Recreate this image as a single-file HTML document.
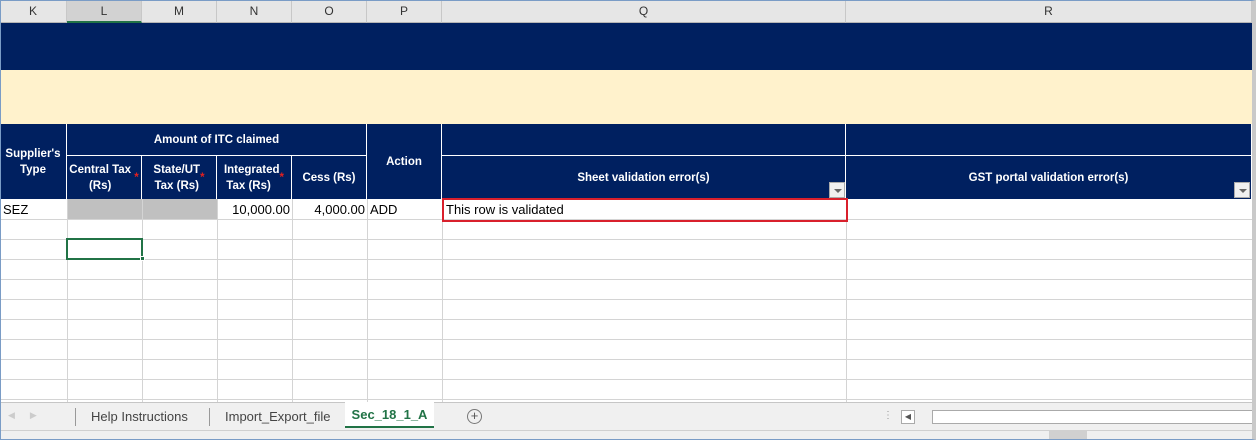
<!DOCTYPE html><html><head><style>
*{margin:0;padding:0;box-sizing:border-box}
body{width:1256px;height:440px;position:relative;overflow:hidden;background:#fff;font-family:"Liberation Sans",sans-serif}
.a{position:absolute}
.ch{top:0;height:23px;background:#e6e6e6;border-right:1px solid #c8c8c8;border-bottom:1px solid #b5b5b5;font-size:12px;color:#333;text-align:center;line-height:23px}
.h{position:absolute;color:#fff;font-weight:bold;font-size:11.5px;display:flex;align-items:center;justify-content:center;text-align:center;line-height:16px;border-right:1px solid #fff;white-space:nowrap}
.hl{left:0;width:1252px;height:1px;background:#d4d4d4}
.vl{top:199px;height:203px;width:1px;background:#d4d4d4}
.s{color:#e02020}
.dd{position:absolute;width:16px;height:16px;background:#f0f0f0;border:1px solid #aaa}
.dd:after{content:"";position:absolute;left:4px;top:6px;border-left:4px solid transparent;border-right:4px solid transparent;border-top:4px solid #666}
.d{position:absolute;top:202px;font-size:13px;font-family:"Liberation Sans",sans-serif;color:#000}
</style></head><body>
<div class="a ch" style="left:0;width:67px">K</div>
<div class="a ch" style="left:67px;width:75px;background:#d2d2d2;border-bottom:2px solid #217346">L</div>
<div class="a ch" style="left:142px;width:75px">M</div>
<div class="a ch" style="left:217px;width:75px">N</div>
<div class="a ch" style="left:292px;width:75px">O</div>
<div class="a ch" style="left:367px;width:75px">P</div>
<div class="a ch" style="left:442px;width:404px">Q</div>
<div class="a ch" style="left:846px;width:406px">R</div>
<div class="a" style="left:0;top:23px;width:1252px;height:47px;background:#002060"></div>
<div class="a" style="left:0;top:70px;width:1252px;height:54px;background:#fff2cc"></div>
<div class="a" style="left:0;top:124px;width:1252px;height:75px;background:#002060"></div>
<div class="h" style="left:0;top:124px;width:67px;height:75px">Supplier's<br>Type</div>
<div class="h" style="left:67px;top:124px;width:300px;height:32px;border-bottom:1px solid #fff">Amount of ITC claimed</div>
<div class="h" style="left:67px;top:156px;width:75px;height:43px">Central Tax<br>(Rs) <span class="s">&nbsp;*</span></div>
<div class="h" style="left:142px;top:156px;width:75px;height:43px">State/UT<br>Tax (Rs) <span class="s">*</span></div>
<div class="h" style="left:217px;top:156px;width:75px;height:43px">Integrated<br>Tax (Rs) &nbsp;<span class="s">*</span></div>
<div class="h" style="left:292px;top:156px;width:75px;height:43px">Cess (Rs)</div>
<div class="h" style="left:367px;top:124px;width:75px;height:75px">Action</div>
<div class="h" style="left:442px;top:124px;width:404px;height:32px;border-bottom:1px solid #fff"></div>
<div class="h" style="left:442px;top:156px;width:404px;height:43px">Sheet validation error(s)</div>
<div class="h" style="left:846px;top:124px;width:406px;height:32px;border-bottom:1px solid #fff"></div>
<div class="h" style="left:846px;top:156px;width:406px;height:43px">GST portal validation error(s)</div>
<div class="dd" style="left:829px;top:182px"></div>
<div class="dd" style="left:1234px;top:182px"></div>
<div class="a" style="left:67px;top:199px;width:150px;height:20px;background:#c0c0c0"></div>
<div class="hl a" style="top:219px"></div><div class="hl a" style="top:239px"></div><div class="hl a" style="top:259px"></div><div class="hl a" style="top:279px"></div><div class="hl a" style="top:299px"></div><div class="hl a" style="top:319px"></div><div class="hl a" style="top:339px"></div><div class="hl a" style="top:359px"></div><div class="hl a" style="top:379px"></div><div class="hl a" style="top:399px"></div>
<div class="vl a" style="left:67px"></div><div class="vl a" style="left:142px"></div><div class="vl a" style="left:217px"></div><div class="vl a" style="left:292px"></div><div class="vl a" style="left:367px"></div><div class="vl a" style="left:442px"></div><div class="vl a" style="left:846px"></div>
<div class="d" style="left:3px">SEZ</div>
<div class="d" style="left:217px;width:73px;text-align:right">10,000.00</div>
<div class="d" style="left:292px;width:73px;text-align:right">4,000.00</div>
<div class="d" style="left:370px">ADD</div>
<div class="a" style="left:442px;top:198px;width:406px;height:24px;border:2px solid #d9202c"></div>
<div class="d" style="left:446px">This row is validated</div>
<div class="a" style="left:66px;top:238px;width:77px;height:22px;border:2px solid #217346"></div>
<div class="a" style="left:140px;top:256px;width:5px;height:5px;background:#217346;border:1px solid #fff"></div>
<div class="a" style="left:0;top:402px;width:1256px;height:28px;background:#f0f0f0;border-top:1px solid #c6c6c6"></div>
<div class="a" style="left:8px;top:410px;font-size:9px;color:#ccc">◀&nbsp;&nbsp;&nbsp;&nbsp;&nbsp;&nbsp;▶</div>
<div class="a" style="left:75px;top:408px;width:1px;height:18px;background:#999"></div>
<div class="a" style="left:91px;top:409px;font-size:13px;color:#444">Help Instructions</div>
<div class="a" style="left:209px;top:408px;width:1px;height:18px;background:#999"></div>
<div class="a" style="left:225px;top:409px;font-size:13px;color:#444">Import_Export_file</div>
<div class="a" style="left:345px;top:402px;width:89px;height:26px;background:#fff;border-bottom:2px solid #217346;font-size:13px;font-weight:bold;color:#217346;text-align:center;line-height:26px">Sec_18_1_A</div>
<div class="a" style="left:467px;top:409px;width:15px;height:15px;border:1px solid #777;border-radius:50%;font-size:13px;line-height:12px;text-align:center;color:#555">+</div>
<div class="a" style="left:883px;top:410px;font-size:10px;color:#999">⋮</div>
<div class="a" style="left:901px;top:410px;width:14px;height:14px;background:#fff;border:1px solid #aaa;font-size:8px;line-height:12px;text-align:center;color:#555">◀</div>
<div class="a" style="left:932px;top:410px;width:324px;height:14px;background:#fff;border:1px solid #aaa"></div>
<div class="a" style="left:0;top:430px;width:1256px;height:10px;background:#f0f0f0;border-top:1px solid #d0d0d0"></div>
<div class="a" style="left:1049px;top:431px;width:38px;height:9px;background:#d0d0d0"></div>
<div class="a" style="left:0;top:0;width:1256px;height:440px;border:1px solid #7a9cc6;border-right:4px solid #c9c9c9"></div>
</body></html>
